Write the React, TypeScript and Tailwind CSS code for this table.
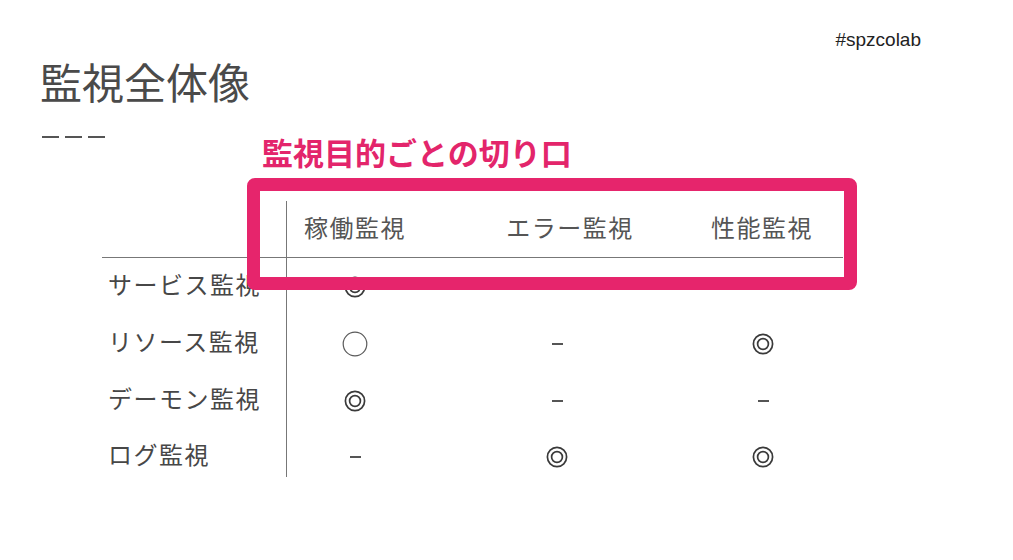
import React from 'react';

const jp = "font-['Noto_Sans_CJK_JP',sans-serif]";

const Double = () => (
  <svg width="22" height="22" viewBox="0 0 22 22">
    <circle cx="11" cy="11" r="9.6" fill="none" stroke="#3a3a3a" strokeWidth="1.7" />
    <circle cx="11" cy="11" r="5.4" fill="none" stroke="#3a3a3a" strokeWidth="1.7" />
  </svg>
);

const Single = () => (
  <svg width="26" height="26" viewBox="0 0 26 26">
    <circle cx="13" cy="13" r="11.8" fill="none" stroke="#5a5a5a" strokeWidth="1.2" />
  </svg>
);

const Dash = () => <div className="w-[11px] h-[2px] bg-[#555]" />;

type Mark = 'double' | 'single' | 'none';

const rows: { label: string; marks: Mark[] }[] = [
  { label: 'サービス監視', marks: ['double', 'none', 'none'] },
  { label: 'リソース監視', marks: ['single', 'none', 'double'] },
  { label: 'デーモン監視', marks: ['double', 'none', 'none'] },
  { label: 'ログ監視', marks: ['none', 'double', 'double'] },
];

const cell = (m: Mark) => {
  if (m === 'double') return <Double />;
  if (m === 'single') return <Single />;
  return <Dash />;
};

export default function App() {
  return (
    <div className={`relative w-full h-[560px] bg-white overflow-hidden ${jp}`}>
      <div className="flex justify-between items-start">
        <h1 className="ml-[40px] mt-[60px] text-[42px] leading-none text-[#4a4a4a] font-normal">
          監視全体像
        </h1>
        <span className="mr-[92px] mt-[30px] text-[19px] leading-none text-[#222] font-['Liberation_Sans',Arial,sans-serif]">
          #spzcolab
        </span>
      </div>

      <div className="flex items-start">
        <div className="ml-[42px] mt-[34px] flex gap-[6px]">
          <div className="w-[17px] h-[2px] bg-[#555]" />
          <div className="w-[17px] h-[2px] bg-[#555]" />
          <div className="w-[17px] h-[2px] bg-[#555]" />
        </div>
        <h2 className="ml-[157px] mt-[34px] text-[31px] leading-none font-bold text-[#e3256b]">
          監視目的ごとの切り口
        </h2>
      </div>

      <div className="ml-[102px] mt-[34px] w-[741px] text-[24px] tracking-[1.5px] leading-none">
        <div className="grid grid-cols-[185px_136px_268px_152px] h-[57px] border-b-[1.5px] border-[#777] text-[#555]">
          <div className="border-r-[1.5px] border-[#777]" />
          <div className="flex items-center justify-center pb-[4px]">稼働監視</div>
          <div className="flex items-center justify-center pl-[26px] pb-[4px]">エラー監視</div>
          <div className="flex items-center justify-center pr-[10px] pb-[4px]">性能監視</div>
        </div>
        {rows.map((r, i) => (
          <div
            key={r.label}
            className={`grid grid-cols-[185px_136px_268px_152px] text-[#474747] ${
              i === rows.length - 1 ? 'h-[48px] pt-[8px]' : 'h-[57px]'
            }`}
          >
            <div
              className={`flex items-center pl-[6px] pb-[6px] border-r-[1.5px] border-[#777] ${
                i === rows.length - 1 ? '-mt-[8px] pt-[8px]' : ''
              }`}
            >
              {r.label}
            </div>
            <div className="flex items-center justify-center">{cell(r.marks[0])}</div>
            <div className="flex items-center justify-center">{cell(r.marks[1])}</div>
            <div className="flex items-center justify-center pr-[8px]">{cell(r.marks[2])}</div>
          </div>
        ))}
      </div>

      <div className="absolute left-[247px] top-[178px] w-[610px] h-[112px] border-[13px] border-[#e6256c] rounded-[8px]" />
    </div>
  );
}
